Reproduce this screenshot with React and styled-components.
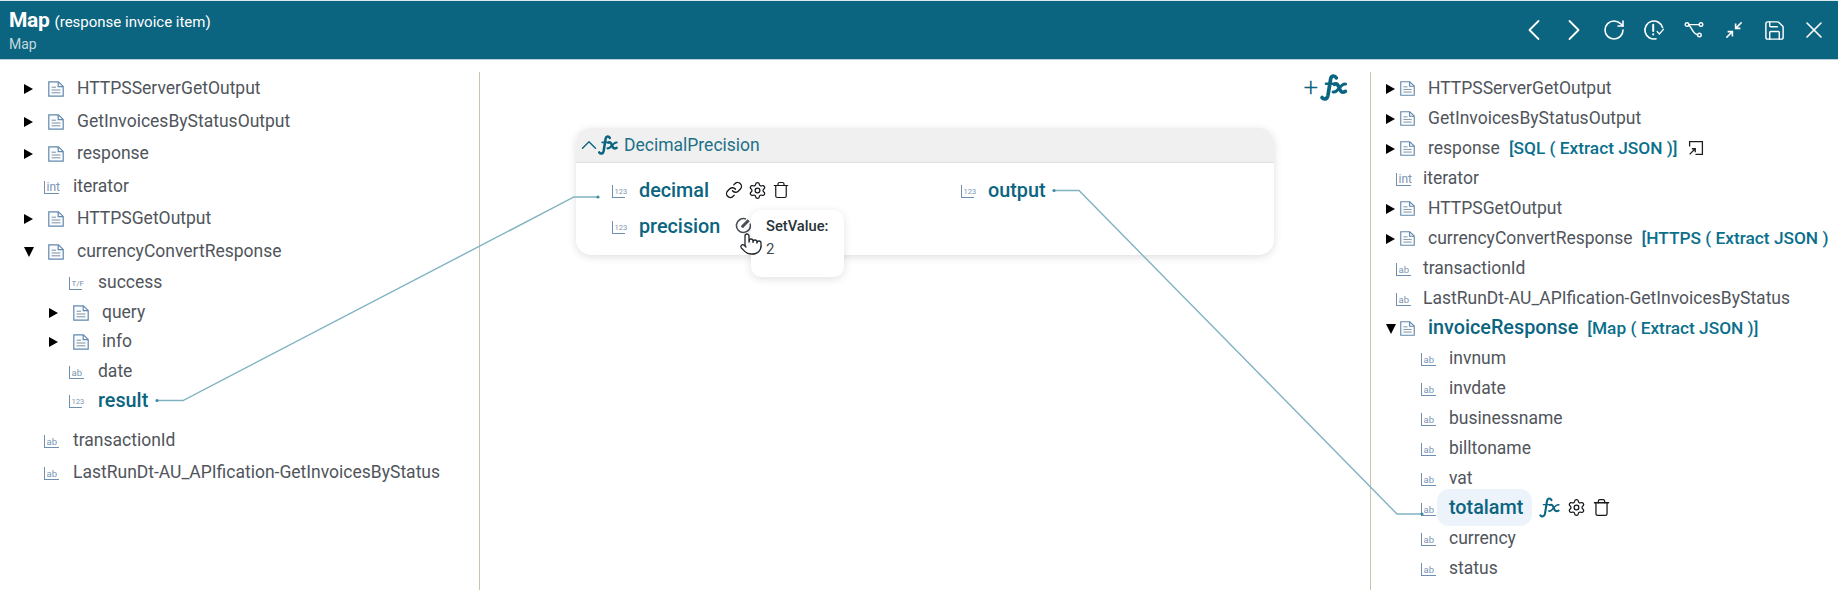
import React from "react";
import styled, { createGlobalStyle } from "styled-components";
import {
  ChevronLeft,
  ChevronRight,
  ChevronUp,
  Link,
  Pointer,
  RotateCw,
  Save,
  Settings,
  Trash,
  X,
} from "lucide-react";

const GlobalStyle = createGlobalStyle`
  html, body {
    margin: 0;
    padding: 0;
    height: 100%;
    overflow: hidden;
    background: #ffffff;
    font-family: Roboto, "Liberation Sans", sans-serif;
  }
`;

const Page = styled.div`
  position: relative;
  width: 1838px;
  height: 590px;
  display: flex;
  flex-direction: column;
  overflow: hidden;
`;

const Header = styled.header`
  flex: none;
  height: 60px;
  display: flex;
  align-items: center;
  justify-content: space-between;
  padding: 0 12px 0 9px;
  box-sizing: border-box;
  background: #0b6480;
  border-top: 1px solid #dfe8ec;
  border-bottom: 1px solid #b9d0d8;
  color: #ffffff;
`;

const TitleBlock = styled.div`
  display: flex;
  flex-direction: column;
  gap: 2px;
`;

const TitleLine = styled.div`
  display: flex;
  align-items: baseline;
  gap: 5px;
  line-height: 24px;
`;

const Title = styled.span`
  font-size: 21px;
  font-weight: 700;
  letter-spacing: -0.3px;
`;

const TitleNote = styled.span`
  font-size: 15px;
  font-weight: 400;
`;

const SubTitle = styled.div`
  font-size: 14px;
  line-height: 16px;
  color: #c6d8df;
`;

const Toolbar = styled.div`
  display: flex;
  align-items: center;
  gap: 16px;
`;

const ToolButton = styled.span`
  width: 24px;
  height: 24px;
  display: flex;
  align-items: center;
  justify-content: center;
  color: #ffffff;

  svg {
    flex: none;
  }
`;

const Main = styled.main`
  flex: 1;
  display: grid;
  grid-template-columns: 480px 891px 1fr;
  padding-top: 12px;
  min-height: 0;
`;

const TreePanel = styled.section`
  min-width: 0;
  overflow: hidden;
  padding-top: ${(p) => p.$top || 0}px;
  margin-right: ${(p) => p.$clip || 0}px;
  border-right: ${(p) => (p.$divider ? "1px solid #cbc3ae" : "none")};
`;

const RightDivider = styled.div`
  min-width: 0;
  border-left: 1px solid #cbc3ae;
  margin-left: -1px;
`;

const Row = styled.div`
  height: ${(p) => p.$h}px;
  padding-top: ${(p) => p.$pad || 0}px;
  display: flex;
  align-items: center;
  padding-left: ${(p) => p.$indent}px;
  white-space: nowrap;
  box-sizing: border-box;
`;

const Caret = styled.span`
  flex: none;
  width: 0;
  height: 0;
  margin-right: ${(p) => p.$gap}px;
  margin-top: 2px;
  border-style: solid;
  ${(p) =>
    p.$open
      ? "border-width: 10px 5px 0 5px; border-color: #000 transparent transparent transparent;"
      : "border-width: 5px 0 5px 9px; border-color: transparent transparent transparent #000;"}
`;

const badgeSizes = { ab: 9.5, int: 12, 123: 7.5, "T/F": 8 };

const TypeBadge = styled.span`
  flex: none;
  box-sizing: border-box;
  width: ${(p) => (p.$small ? 13 : 15)}px;
  height: 13px;
  margin-top: 3px;
  margin-right: ${(p) => p.$gap}px;
  padding: 2px 0 0 1.5px;
  border-left: 1px solid #6d8fb0;
  border-bottom: 1px solid #6d8fb0;
  color: #7895b2;
  font-size: ${(p) => badgeSizes[p.$type]}px;
  line-height: 9px;
  white-space: nowrap;
  overflow: visible;
`;

const Label = styled.span`
  font-size: 17.5px;
  color: #50555c;
`;

const ActiveLabel = styled.span`
  font-size: 19.8px;
  font-weight: 500;
  color: #0b6480;
`;

const Mapping = styled.span`
  margin-left: ${(p) => p.$gap}px;
  font-size: 17.3px;
  font-weight: 500;
  color: #0b6f8c;
`;

const Highlight = styled.span`
  display: flex;
  align-items: center;
  height: 37px;
  margin-left: -12px;
  padding: 0 9px 0 12px;
  border-radius: 12px;
  background: #edf3fa;
`;

const IconGroup = styled.span`
  display: flex;
  align-items: center;
  gap: ${(p) => p.$spread}px;
  margin-left: ${(p) => p.$gap}px;
  color: #15181c;
`;

const Center = styled.section`
  min-width: 0;
  padding-left: 96px;
  position: relative;
`;

const AddBar = styled.div`
  height: 56px;
  display: flex;
  align-items: center;
  justify-content: flex-end;
  gap: 1px;
  padding: 0 22px 26px 0;
  box-sizing: border-box;
  color: #0b6480;
`;

const Plus = styled.span`
  font-size: 26px;
  font-weight: 300;
  line-height: 24px;
`;

const Card = styled.div`
  width: 698px;
  height: 127px;
  border-radius: 15px;
  background: #ffffff;
  box-shadow: 0 2px 9px rgba(0, 0, 0, 0.13);
`;

const CardHeader = styled.div`
  height: 35px;
  display: flex;
  align-items: center;
  box-sizing: border-box;
  border-radius: 15px 15px 0 0;
  border-bottom: 1px solid #dedede;
  background: #f0f0f0;
  color: #0b6480;
`;

const Collapse = styled(ChevronUp)`
  flex: none;
  margin-right: -5px;
`;

const CardName = styled.span`
  margin-left: 5px;
  font-size: 17.5px;
  color: #1d7088;
`;

const CardBody = styled.div`
  display: grid;
  grid-template-columns: 385px 1fr;
  padding-top: 9px;
`;

const PortColumn = styled.div`
  display: flex;
  flex-direction: column;
`;

const Port = styled.div`
  height: 36px;
  display: flex;
  align-items: center;
  padding-left: ${(p) => p.$indent || 0}px;
`;

const PortLabel = styled.span`
  font-size: 19.8px;
  font-weight: 500;
  color: #0b6480;
`;

const Tooltip = styled.div`
  position: absolute;
  left: 271px;
  top: 138px;
  width: 93px;
  height: 67px;
  padding: 6px 15px;
  box-sizing: border-box;
  border-radius: 10px;
  background: #ffffff;
  box-shadow: 0 2px 9px rgba(0, 0, 0, 0.12);
  color: #263238;
  font-size: 14.7px;
  z-index: 2;
`;

const TipTitle = styled.div`
  font-weight: 500;
  line-height: 20px;
`;

const TipValue = styled.div`
  margin-top: 3px;
  font-size: 15px;
  line-height: 20px;
  color: #3d4a52;
`;

const Cursor = styled.span`
  position: absolute;
  left: 259px;
  top: 160px;
  line-height: 0;
  z-index: 3;
`;

const Wires = styled.svg`
  position: absolute;
  left: 0;
  top: 0;
  pointer-events: none;
  z-index: 1;
`;

const FxIcon = ({ size = 22, color = "currentColor", weight = 2.8 }) => (
  <svg
    width={size * 1.1}
    height={size}
    viewBox="0 0 24 22"
    fill="none"
    stroke={color}
    strokeLinecap="round"
    style={{ flex: "none" }}
  >
    <path d="M14 3.2C12.6 .8 10 1.2 9.4 4L7.2 17.5C6.6 20.6 4 21.2 2.4 19.2" strokeWidth={weight} />
    <path d="M5.6 8H12.6" strokeWidth={weight * 0.7} />
    <path d="M12.4 8.4C14.6 7.4 15.6 9 16.4 11.4C17.2 14 18.4 15.8 21.4 14.2" strokeWidth={weight} />
    <path d="M21.6 8.2C19.4 7.6 17.6 10 15.6 12.4C14.4 13.8 13 15.2 11.4 14.6" strokeWidth={weight * 0.8} />
  </svg>
);

const DocIcon = ({ size, gap }) => (
  <svg
    width={size}
    height={size}
    viewBox="0 0 16 16"
    fill="none"
    stroke="#6288ad"
    strokeWidth="1.2"
    style={{ flex: "none", marginRight: gap, marginTop: 2 }}
  >
    <path d="M.8.8H10.4L15.2 5.4V15.2H.8Z" fill="#fbfcfe" />
    <path d="M10.2 1V5.6H15" />
    <path d="M3.6 6.2H8M3.6 9H12.4M3.6 11.8H12.4" stroke="#7c8fa3" strokeWidth="1" />
  </svg>
);

const OpenBox = () => (
  <svg width="16" height="16" viewBox="0 0 15 15" fill="none" stroke="#1b1e22" strokeWidth="1.2" style={{ marginLeft: 10 }}>
    <path d="M1.5 6V1.5H13.5V13.5H7" />
    <path d="M1.5 13.5L6.5 8.5M3.6 8.2H6.8V11.4" />
  </svg>
);

const CheckClock = () => (
  <svg width="22" height="22" viewBox="0 0 22 22" fill="none" stroke="#fff" strokeWidth="1.6" strokeLinecap="round">
    <path d="M19.6 8.6A9 9 0 1 0 13 19.8" />
    <path d="M10.2 5.8V12M10.2 15.2V15.6" strokeWidth="2" />
    <path d="M14.2 12.6L16.4 15L20.4 10.4" strokeWidth="1.4" />
  </svg>
);

const RouteIcon = () => (
  <svg width="20" height="18" viewBox="0 0 20 18" fill="none" stroke="#fff" strokeWidth="1.4">
    <circle cx="3" cy="3.6" r="1.8" />
    <circle cx="17" cy="3.6" r="1.8" />
    <circle cx="15.4" cy="14" r="1.8" />
    <path d="M4.8 3.6H15.2M5 4.4C8 6.4 8.4 12.6 13.6 13.8" />
  </svg>
);

const CompressIcon = () => (
  <svg width="20" height="20" viewBox="0 0 20 20" fill="none" stroke="#fff" strokeWidth="1.6">
    <path d="M17.6 2.4L12 8M11.6 3.6V8.4H16.4" />
    <path d="M2.4 17.6L8 12M3.6 11.6H8.4V16.4" />
  </svg>
);

const EditDial = () => (
  <svg width="17" height="17" viewBox="0 0 17 17" fill="none" stroke="#4a4f57" strokeWidth="1.6" style={{ marginLeft: 15, marginTop: -1 }}>
    <path d="M11 2A7 7 0 1 0 15.2 6.6" />
    <path d="M6.8 10.2L13.6 3.2" strokeWidth="3" />
  </svg>
);

const leftTree = [
  { name: "HTTPSServerGetOutput", h: 32.5 },
  { name: "GetInvoicesByStatusOutput", h: 32.5 },
  { name: "response", h: 32.5 },
  { name: "iterator", type: "int", h: 32.5 },
  { name: "HTTPSGetOutput", h: 32.5 },
  { name: "currencyConvertResponse", open: true, h: 32.5 },
  { name: "success", type: "T/F", depth: 1, h: 29.8, small: true },
  { name: "query", depth: 1, h: 29.8 },
  { name: "info", depth: 1, h: 29.8 },
  { name: "date", type: "ab", depth: 1, h: 29 },
  { name: "result", type: "123", depth: 1, h: 29.8, active: true, small: true },
  { name: "transactionId", type: "ab", h: 41, pad: 9 },
  { name: "LastRunDt-AU_APIfication-GetInvoicesByStatus", type: "ab", h: 32 },
];

const rightTree = [
  { name: "HTTPSServerGetOutput" },
  { name: "GetInvoicesByStatusOutput" },
  { name: "response", mapping: "[SQL ( Extract JSON )]", box: true },
  { name: "iterator", type: "int" },
  { name: "HTTPSGetOutput" },
  { name: "currencyConvertResponse", mapping: "[HTTPS ( Extract JSON )]" },
  { name: "transactionId", type: "ab" },
  { name: "LastRunDt-AU_APIfication-GetInvoicesByStatus", type: "ab" },
  { name: "invoiceResponse", open: true, active: true, mapping: "[Map ( Extract JSON )]" },
  { name: "invnum", type: "ab", depth: 1 },
  { name: "invdate", type: "ab", depth: 1 },
  { name: "businessname", type: "ab", depth: 1 },
  { name: "billtoname", type: "ab", depth: 1 },
  { name: "vat", type: "ab", depth: 1 },
  { name: "totalamt", type: "ab", depth: 1, selected: true },
  { name: "currency", type: "ab", depth: 1 },
  { name: "status", type: "ab", depth: 1 },
];

const LeftRow = ({ item }) => {
  const depth = item.depth ? 25 : 0;
  if (item.type) {
    return (
      <Row $h={item.h} $pad={item.pad} $indent={44 + depth}>
        <TypeBadge $type={item.type} $gap={item.small ? 16 : 14} $small={item.small}>
          {item.type}
        </TypeBadge>
        {item.active ? <ActiveLabel>{item.name}</ActiveLabel> : <Label>{item.name}</Label>}
      </Row>
    );
  }
  return (
    <Row $h={item.h} $indent={24 + depth}>
      <Caret $open={item.open} $gap={item.open ? 14 : 15} />
      <DocIcon size={16} gap={13} />
      <Label>{item.name}</Label>
    </Row>
  );
};

const RightRow = ({ item }) => {
  if (item.type) {
    return (
      <Row $h={30} $indent={item.depth ? 50 : 25}>
        <TypeBadge $type={item.type} $gap={item.depth ? 13 : 12}>
          {item.type}
        </TypeBadge>
        {item.selected ? (
          <>
            <Highlight>
              <ActiveLabel>{item.name}</ActiveLabel>
            </Highlight>
            <IconGroup $gap={6} $spread={6}>
              <FxIcon size={21} color="#0b6480" weight={2.2} />
              <Settings size={19} strokeWidth={1.6} />
              <Trash size={19} strokeWidth={1.6} />
            </IconGroup>
          </>
        ) : (
          <Label>{item.name}</Label>
        )}
      </Row>
    );
  }
  return (
    <Row $h={30} $indent={15}>
      <Caret $open={item.open} $gap={item.open ? 4 : 5} />
      <DocIcon size={15} gap={13} />
      {item.active ? <ActiveLabel>{item.name}</ActiveLabel> : <Label>{item.name}</Label>}
      {item.mapping && <Mapping $gap={item.active ? 9 : 9}>{item.mapping}</Mapping>}
      {item.box && <OpenBox />}
    </Row>
  );
};

export default function App() {
  return (
    <Page>
      <GlobalStyle />
      <Header>
        <TitleBlock>
          <TitleLine>
            <Title>Map</Title>
            <TitleNote>(response invoice item)</TitleNote>
          </TitleLine>
          <SubTitle>Map</SubTitle>
        </TitleBlock>
        <Toolbar>
          <ToolButton><ChevronLeft size={36} strokeWidth={1.2} /></ToolButton>
          <ToolButton><ChevronRight size={36} strokeWidth={1.2} /></ToolButton>
          <ToolButton><RotateCw size={24} strokeWidth={1.6} /></ToolButton>
          <ToolButton><CheckClock /></ToolButton>
          <ToolButton><RouteIcon /></ToolButton>
          <ToolButton><CompressIcon /></ToolButton>
          <ToolButton><Save size={23} strokeWidth={1.5} /></ToolButton>
          <ToolButton><X size={28} strokeWidth={1.4} /></ToolButton>
        </Toolbar>
      </Header>

      <Main>
        <TreePanel $divider>
          {leftTree.map((item) => (
            <LeftRow key={item.name} item={item} />
          ))}
        </TreePanel>

        <Center>
          <AddBar>
            <Plus>+</Plus>
            <FxIcon size={27} weight={3} />
          </AddBar>
          <Card>
            <CardHeader>
              <Collapse size={26} strokeWidth={1.3} />
              <FxIcon size={20} />
              <CardName>DecimalPrecision</CardName>
            </CardHeader>
            <CardBody>
              <PortColumn>
                <Port $indent={36}>
                  <TypeBadge $type="123" $small $gap={14}>123</TypeBadge>
                  <PortLabel>decimal</PortLabel>
                  <IconGroup $gap={16} $spread={5}>
                    <Link size={18} strokeWidth={1.8} />
                    <Settings size={19} strokeWidth={1.6} />
                    <Trash size={18} strokeWidth={1.6} />
                  </IconGroup>
                </Port>
                <Port $indent={36}>
                  <TypeBadge $type="123" $small $gap={14}>123</TypeBadge>
                  <PortLabel>precision</PortLabel>
                  <EditDial />
                </Port>
              </PortColumn>
              <PortColumn>
                <Port>
                  <TypeBadge $type="123" $small $gap={14}>123</TypeBadge>
                  <PortLabel>output</PortLabel>
                </Port>
              </PortColumn>
            </CardBody>
          </Card>
          <Tooltip>
            <TipTitle>SetValue:</TipTitle>
            <TipValue>2</TipValue>
          </Tooltip>
          <Cursor>
            <Pointer size={24} strokeWidth={1.3} color="#22262b" fill="#ffffff" />
          </Cursor>
        </Center>

        <RightDivider>
          <TreePanel $top={0.5} $clip={10}>
            {rightTree.map((item) => (
              <RightRow key={item.name} item={item} />
            ))}
          </TreePanel>
        </RightDivider>
      </Main>

      <Wires width="1838" height="590" fill="none" stroke="#7fb3c2" strokeWidth="1.4">
        <path d="M157 400.5H183L574 197H598" />
        <circle cx="157" cy="400.5" r="1.6" fill="#3f8ca2" stroke="none" />
        <circle cx="598" cy="197" r="1.6" fill="#3f8ca2" stroke="none" />
        <path d="M1054 190.5H1079L1397 514H1422" />
        <circle cx="1054" cy="190.5" r="1.6" fill="#3f8ca2" stroke="none" />
        <circle cx="1422" cy="514" r="1.6" fill="#3f8ca2" stroke="none" />
      </Wires>
    </Page>
  );
}
